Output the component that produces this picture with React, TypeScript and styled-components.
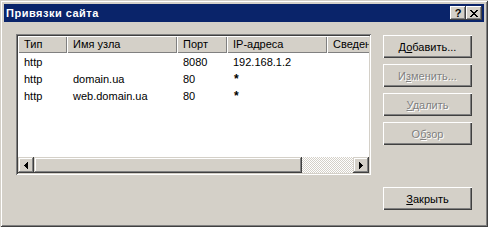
import React from "react";
import styled, { createGlobalStyle } from "styled-components";

const Global = createGlobalStyle`
  html, body { margin: 0; padding: 0; background: #d4d0c8; }
  * { box-sizing: border-box; }
`;

const FACE = "#d4d0c8";
const FONT = `"Liberation Sans", Arial, sans-serif`;

const Frame = styled.div`
  width: 488px;
  height: 227px;
  background: ${FACE};
  padding: 4px;
  display: flex;
  flex-direction: column;
  font-family: ${FONT};
  font-size: 11px;
  box-shadow: inset 1px 1px ${FACE}, inset -1px -1px #404040, inset 2px 2px #fff,
    inset -2px -2px #808080;
`;

const TitleBar = styled.div`
  height: 18px;
  background: #0a246a;
  display: flex;
  align-items: center;
  padding: 0 2px 0 2px;
`;

const Title = styled.div`
  flex: 1;
  color: #fff;
  font-weight: bold;
  font-size: 11px;
  letter-spacing: 0.5px;
  line-height: 18px;
`;

const CaptionBtn = styled.div`
  width: 16px;
  height: 14px;
  background: ${FACE};
  display: flex;
  align-items: center;
  justify-content: center;
  color: #000;
  font-weight: bold;
  font-size: 11px;
  line-height: 14px;
  box-shadow: inset -1px -1px #404040, inset 1px 1px #fff, inset -2px -2px #808080;
`;

const Body = styled.div`
  flex: 1;
  display: flex;
  gap: 12px;
  padding: 12px 12px 13px 12px;
`;

const ListBox = styled.div`
  width: 355px;
  height: 141px;
  background: #fff;
  padding: 2px;
  display: flex;
  flex-direction: column;
  overflow: hidden;
  box-shadow: inset 1px 1px #808080, inset -1px -1px #fff, inset 2px 2px #404040,
    inset -2px -2px ${FACE};
`;

const COLS = [49, 110, 50, 100, 120];

const HeaderRow = styled.div`
  display: flex;
  height: 17px;
  overflow: hidden;
  flex-shrink: 0;
`;

const HeaderCell = styled.div<{ $w: number }>`
  width: ${(p) => p.$w}px;
  flex-shrink: 0;
  height: 17px;
  background: ${FACE};
  padding-left: 6px;
  line-height: 17px;
  color: #000;
  white-space: nowrap;
  overflow: hidden;
  box-shadow: inset 1px 1px #fff, inset -1px -1px #808080;
`;

const Row = styled.div`
  display: flex;
  height: 17px;
  flex-shrink: 0;
  padding-top: 1px;
`;

const Cell = styled.div<{ $w: number; $star?: boolean }>`
  width: ${(p) => p.$w}px;
  flex-shrink: 0;
  padding-left: ${(p) => (p.$star ? 7 : 6)}px;
  line-height: 16px;
  font-size: ${(p) => (p.$star ? 12 : 11)}px;
  font-weight: ${(p) => (p.$star ? "bold" : "normal")};
  color: #000;
  white-space: nowrap;
  overflow: hidden;
`;

const HScroll = styled.div`
  margin-top: auto;
  height: 16px;
  display: flex;
  flex-shrink: 0;
`;

const Raised = styled.div<{ $w: number }>`
  width: ${(p) => p.$w}px;
  height: 16px;
  flex-shrink: 0;
  background: ${FACE};
  display: flex;
  align-items: center;
  justify-content: center;
  box-shadow: inset -1px -1px #404040, inset 1px 1px ${FACE}, inset -2px -2px #808080,
    inset 2px 2px #fff;
`;

const Track = styled.div`
  flex: 1;
  height: 16px;
  background: repeating-conic-gradient(${FACE} 0 25%, #fff 0 50%) 0 0 / 2px 2px;
`;

const Side = styled.div`
  width: 89px;
  display: flex;
  flex-direction: column;
  gap: 6px;
  padding-top: 1px;
`;

const Btn = styled.button<{ $push?: boolean }>`
  width: 89px;
  height: 23px;
  flex-shrink: 0;
  margin-top: ${(p) => (p.$push ? "auto" : "0")};
  border: 0;
  padding: 0;
  background: ${FACE};
  font-family: ${FONT};
  font-size: 11px;
  color: #000;
  box-shadow: inset 1px 1px #fff, inset -1px -1px #404040, inset -2px -2px #808080;
  &:disabled {
    color: #808080;
    text-shadow: 1px 1px #fff;
  }
  u {
    text-underline-offset: 1px;
  }
`;

const rows = [
  ["http", "", "8080", "192.168.1.2"],
  ["http", "domain.ua", "80", "*"],
  ["http", "web.domain.ua", "80", "*"],
];

const headers = ["Тип", "Имя узла", "Порт", "IP-адреса", "Сведения"];

export default function App() {
  return (
    <>
      <Global />
      <Frame>
        <TitleBar>
          <Title>Привязки сайта</Title>
          <CaptionBtn>?</CaptionBtn>
          <CaptionBtn>
            <svg width="8" height="7" viewBox="0 0 8 7" shapeRendering="crispEdges">
              <path
                d="M0 0h2v1H0zM6 0h2v1H6zM1 1h2v1H1zM5 1h2v1H5zM2 2h4v1H2zM3 3h2v1H3zM2 4h4v1H2zM1 5h2v1H1zM5 5h2v1H5zM0 6h2v1H0zM6 6h2v1H6z"
                fill="#000"
              />
            </svg>
          </CaptionBtn>
        </TitleBar>
        <Body>
          <ListBox>
            <HeaderRow>
              {headers.map((h, i) => (
                <HeaderCell key={h} $w={COLS[i]}>
                  {h}
                </HeaderCell>
              ))}
            </HeaderRow>
            {rows.map((r, ri) => (
              <Row key={ri}>
                {r.map((c, ci) => (
                  <Cell key={ci} $w={COLS[ci]} $star={c === "*"}>
                    {c}
                  </Cell>
                ))}
              </Row>
            ))}
            <HScroll>
              <Raised $w={16}>
                <svg width="4" height="7" viewBox="0 0 4 7" shapeRendering="crispEdges">
                  <path d="M3 0h1v7H3zM2 1h1v5H2zM1 2h1v3H1zM0 3h1v1H0z" fill="#000" />
                </svg>
              </Raised>
              <Raised $w={268} />
              <Track />
              <Raised $w={16}>
                <svg width="4" height="7" viewBox="0 0 4 7" shapeRendering="crispEdges">
                  <path d="M0 0h1v7H0zM1 1h1v5H1zM2 2h1v3H2zM3 3h1v1H3z" fill="#000" />
                </svg>
              </Raised>
            </HScroll>
          </ListBox>
          <Side>
            <Btn>
              Д<u>о</u>бавить...
            </Btn>
            <Btn disabled>
              И<u>з</u>менить...
            </Btn>
            <Btn disabled>
              <u>У</u>далить
            </Btn>
            <Btn disabled>
              О<u>б</u>зор
            </Btn>
            <Btn $push>
              <u>З</u>акрыть
            </Btn>
          </Side>
        </Body>
      </Frame>
    </>
  );
}
